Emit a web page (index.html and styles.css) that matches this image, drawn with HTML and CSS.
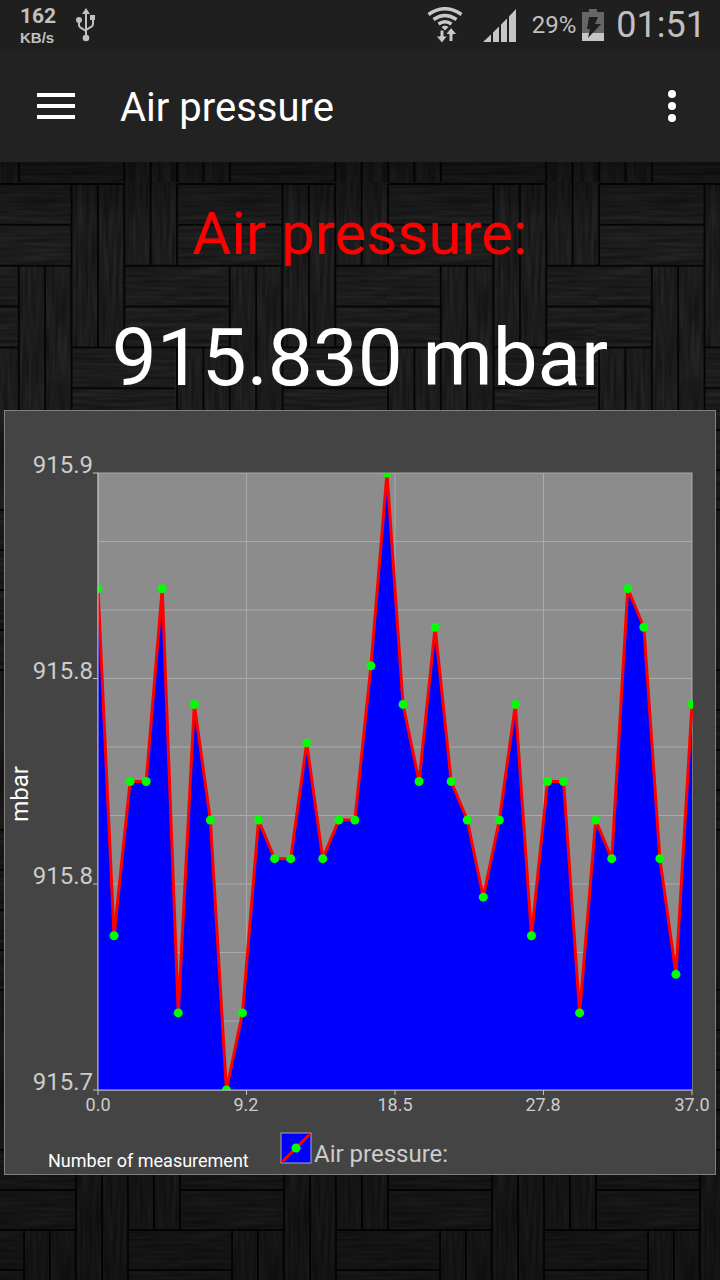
FILE: index.html
```html
<!DOCTYPE html>
<html lang="en">
<head>
    <meta charset="UTF-8">
    <meta name="viewport" content="width=device-width, initial-scale=1">
    <title>Air pressure</title>
    <link rel="stylesheet" href="styles.css">
</head>
<body>
<div class="status-bar">
    <div class="speed">
        <span class="speed-value">162</span>
        <span class="speed-unit">KB/s</span>
    </div>
    <svg class="usb" width="22" height="36" viewBox="0 0 22 36" fill="none" stroke="#c0c0c0" stroke-width="2">
        <path d="M11 30V5M4 13v5q0 2 2 3l5 3M18 11v6q0 2-2 3l-5 3"/>
        <path d="M11 1l4 6H7z" fill="#c0c0c0" stroke="none"/>
        <circle cx="4" cy="13" r="3" fill="#c0c0c0" stroke="none"/>
        <path d="M15 8h5v5h-5z" fill="#c0c0c0" stroke="none"/>
        <circle cx="11" cy="31" r="3.3" fill="#c0c0c0" stroke="none"/>
    </svg>
    <svg class="wifi" width="36" height="36" viewBox="0 0 36 36" fill="none" stroke="#c8c8c8" stroke-width="3.500">
        <path d="M1.500 7.500Q18-4 34.500 7.500M6.500 12.500q11.500-8 23 0M11.500 17q6.500-4.500 13 0"/>
        <path d="M14.500 20q3.500-2.500 7 0L18 23.500z" fill="#c8c8c8" stroke="none"/>
        <path d="M13 23h4v6h3.500l-5.500 7-6-7h4zM22 34.500h4v-7h4L24 20.500 18.500 27.500H22z" fill="#c8c8c8" stroke="#1f1f1f" stroke-width="1"/>
    </svg>
    <svg class="signal" width="34" height="34" viewBox="0 0 34 34" fill="#c6c6c6">
        <path d="M0 34l8-7.500V34zM10 24.500l6-6V34h-6zM18 16.500l6-6V34h-6zM26 8.500l7-7.500v33h-7z"/>
    </svg>
    <span class="percent">29%</span>
    <svg class="battery" width="22" height="32" viewBox="0 0 22 32">
        <path d="M7 0h8v3h7v29H0V3h7z" fill="#666"/>
        <path d="M0 24h22v8H0z" fill="#c6c6c6"/>
        <path d="M7 8h9l-3 7h6L6 29l2-9H5z" fill="#1f1f1f"/>
    </svg>
    <span class="clock">01:51</span>
</div>
<header class="app-bar">
    <button class="menu" aria-label="Menu">
        <svg width="38" height="26" viewBox="0 0 38 26" fill="#fff">
            <path d="M0 0h38v4H0zM0 11h38v4H0zM0 22h38v4H0z"/>
        </svg>
    </button>
    <h1>Air pressure</h1>
    <button class="more" aria-label="More options">
        <svg width="8" height="32" viewBox="0 0 8 32" fill="#fff">
            <circle cx="4" cy="4" r="4"/>
            <circle cx="4" cy="16" r="4"/>
            <circle cx="4" cy="28" r="4"/>
        </svg>
    </button>
</header>
<main>
    <section class="reading">
        <h2>Air pressure:</h2>
        <p class="value">915.830 mbar</p>
    </section>
    <section class="chart">
        <svg viewBox="0 0 710 763" role="img" aria-label="Air pressure chart">
            <defs>
                <clipPath id="plot-clip">
                    <rect width="595" height="617"/>
                </clipPath>
            </defs>
            <g transform="translate(93 62)">
                <rect class="plot" width="594" height="617"/>
                <path class="grid" d="M148.500 0v617M297 0v617M445.500 0v617M0 68.500h594M0 137h594M0 205.500h594M0 274h594M0 342.500h594M0 411h594M0 479.500h594M0 548h594"/>
                <rect class="frame" width="594" height="617"/>
                <g id="series" clip-path="url(#plot-clip)">
                    <polygon class="area"/>
                    <polyline class="line"/>
                </g>
                <path class="axis" d="M0 0v617M-5 617h599M-5 0H0M-5 205.500H0M-5 411H0M0 617v5M148.500 617v5M297 617v5M445.500 617v5M594 617v5"/>
                <g class="y-labels">
                    <text x="-5" y="0">915.9</text>
                    <text x="-5" y="206">915.8</text>
                    <text x="-5" y="411">915.8</text>
                    <text x="-5" y="617">915.7</text>
                </g>
                <g class="x-labels">
                    <text x="0" y="638">0.0</text>
                    <text x="148" y="638">9.2</text>
                    <text x="297" y="638">18.5</text>
                    <text x="445" y="638">27.8</text>
                    <text x="594" y="638">37.0</text>
                </g>
            </g>
            <text class="y-title" transform="translate(23 383) rotate(-90)">mbar</text>
            <text class="x-title" x="43" y="756">Number of measurement</text>
            <g transform="translate(276 722)">
                <rect class="legend-box" width="30" height="30"/>
                <path class="line" d="M1 29L29 1"/>
                <circle class="dot" cx="15" cy="15" r="4.500"/>
            </g>
            <text class="legend" x="309" y="751">Air pressure:</text>
        </svg>
    </section>
</main>
<script>
    // one entry per measurement, in steps above the lowest value
    const steps = [
        13, 4, 8, 8, 13, 2, 10, 7, 0, 2, 7, 6, 6, 9, 6, 7, 7, 11, 16,
        10, 8, 12, 8, 7, 5, 7, 10, 4, 8, 8, 2, 7, 6, 13, 12, 6, 3, 10
    ];
    const width = 594;
    const height = 617;
    const series = document.getElementById('series');
    const points = steps.map((s, i) => [i * width / (steps.length - 1), height - s * height / 16]);

    series.querySelector('.line').setAttribute('points', points.join(' '));
    series.querySelector('.area').setAttribute('points', `0,${height} ${points.join(' ')} ${width},${height}`);

    points.forEach(([x, y]) => {
        const dot = document.createElementNS('http://www.w3.org/2000/svg', 'circle');
        dot.setAttribute('class', 'dot');
        dot.setAttribute('cx', x);
        dot.setAttribute('cy', y);
        dot.setAttribute('r', 4.5);
        series.appendChild(dot);
    });
</script>
</body>
</html>
```
FILE: styles.css
```css
:root {
    --wood: url("data:image/svg+xml,%3Csvg xmlns='http://www.w3.org/2000/svg' viewBox='0 0 208 328' preserveAspectRatio='none'%3E%3Cdefs%3E%3Cfilter id='h' x='0' y='0' width='1' height='1'%3E%3CfeTurbulence type='fractalNoise' baseFrequency='.02 .3' numOctaves='2'/%3E%3CfeColorMatrix values='0 0 0 0 1 0 0 0 0 1 0 0 0 0 1 .12 0 0 0 -.03'/%3E%3CfeComposite operator='in' in2='SourceGraphic'/%3E%3C/filter%3E%3Cfilter id='v' x='0' y='0' width='1' height='1'%3E%3CfeTurbulence type='fractalNoise' baseFrequency='.3 .02' numOctaves='2'/%3E%3CfeColorMatrix values='0 0 0 0 1 0 0 0 0 1 0 0 0 0 1 .12 0 0 0 -.03'/%3E%3C/filter%3E%3Cpath id='p' d='M0 0h104v82H0zM-2 82h54v82H-2zM156 82h52v82h-52zM104 164h104v82H104zM52 246h104v82H52z'/%3E%3C/defs%3E%3Cpath fill='%23151515' d='M0 0h208v328H0z'/%3E%3Cpath filter='url(%23v)' d='M0 0h208v328H0z'/%3E%3Cg transform='translate(2 2)'%3E%3Cuse href='%23p' fill='%23151515'/%3E%3Cuse href='%23p' filter='url(%23h)'/%3E%3Cg stroke='%23050505' stroke-width='2' fill='none'%3E%3Cpath d='M0 0h156M0 41h104M-2 82h106M156 82h52M-2 123h54M156 123h52M-2 164h54M104 164h104M104 205h104M52 246h156M52 287h104'/%3E%3Cpath d='M0 0v82M104 0v82M130 0v82M156 0v82M182-2v84M156 82v82M52 82v82M78 82v82M104 82v82M130 82v82M104 164v82M0 164v82M26 164v82M52 164v82M78 164v82M52 246v82M156 246v82M182 246v82M0 246v82M26 246v82'/%3E%3C/g%3E%3C/g%3E%3C/svg%3E");
}

* {
    box-sizing: border-box;
}

body {
    display: flex;
    flex-direction: column;
    min-height: 100vh;
    margin: 0;
    background-color: #141414;
    font-family: Roboto, sans-serif;
    color: white;
}

.status-bar {
    display: flex;
    align-items: center;
    height: 50px;
    padding: 0 14px 0 20px;
    background-color: #1f1f1f;
    color: #c0c0c0;
}

.speed {
    display: flex;
    flex-direction: column;
    width: 36px;
    font-weight: bold;
}

.speed-value {
    font-size: 21px;
    line-height: 25px;
}

.speed-unit {
    font-family: "Liberation Sans", sans-serif;
    font-size: 15px;
    line-height: 17px;
}

.usb {
    margin-left: 19px;
}

.wifi {
    margin-left: auto;
}

.signal {
    margin-left: 20px;
}

.percent {
    margin-left: 15px;
    font-size: 24px;
}

.battery {
    margin: 0 12px 0 6px;
}

.clock {
    font-size: 36px;
}

.app-bar {
    display: flex;
    align-items: center;
    height: 112px;
    padding: 0 32px 0 25px;
    background-color: #222;
}

button {
    display: flex;
    align-items: center;
    justify-content: center;
    height: 56px;
    padding: 0 12px;
    border: none;
    background: none;
    cursor: pointer;
}

h1 {
    flex: 1;
    margin: 0 0 0 33px;
    padding-top: 2px;
    font-size: 40px;
    font-weight: 400;
}

main {
    flex: 1;
    background-image: linear-gradient(rgba(0, 0, 0, 0), rgba(0, 0, 0, 0.3)), var(--wood);
    background-position: 0 0, 178px 986px;
    background-size: auto, 208px 320px;
}

.reading {
    padding-top: 36px;
    background-image: linear-gradient(rgba(0, 0, 0, 0.4), rgba(0, 0, 0, 0) 60px), var(--wood);
    background-position: 0 0, 175px 20px;
    background-size: auto, 211px 327px;
    text-align: center;
}

h2 {
    margin: 0;
    font-size: 60px;
    font-weight: 400;
    line-height: 72px;
    color: red;
}

.value {
    margin: 0;
    padding: 40px 0 4px;
    font-size: 80px;
    line-height: 96px;
}

.chart {
    margin: 0 4px;
    border: 1px solid #808080;
    background-color: #444;
}

.chart svg {
    display: block;
    width: 100%;
}

.chart text {
    font-size: 24px;
    fill: #ccc;
}

.plot {
    fill: #8c8c8c;
}

.frame {
    fill: none;
    stroke: #aaa;
}

.grid,
.axis {
    fill: none;
    stroke: #aaa;
    stroke-width: 1;
}

.axis {
    stroke: #c0c0c0;
}

.area {
    fill: blue;
}

.line {
    fill: none;
    stroke: red;
    stroke-width: 3;
}

.dot {
    fill: lime;
}

.y-labels {
    text-anchor: end;
}

.x-labels {
    text-anchor: middle;
}

.chart .x-labels text {
    font-size: 18px;
}

.chart .y-title {
    fill: white;
    text-anchor: middle;
}

.chart .x-title {
    font-size: 18px;
    fill: white;
}

.legend-box {
    fill: blue;
    stroke: #aaa;
}
```
